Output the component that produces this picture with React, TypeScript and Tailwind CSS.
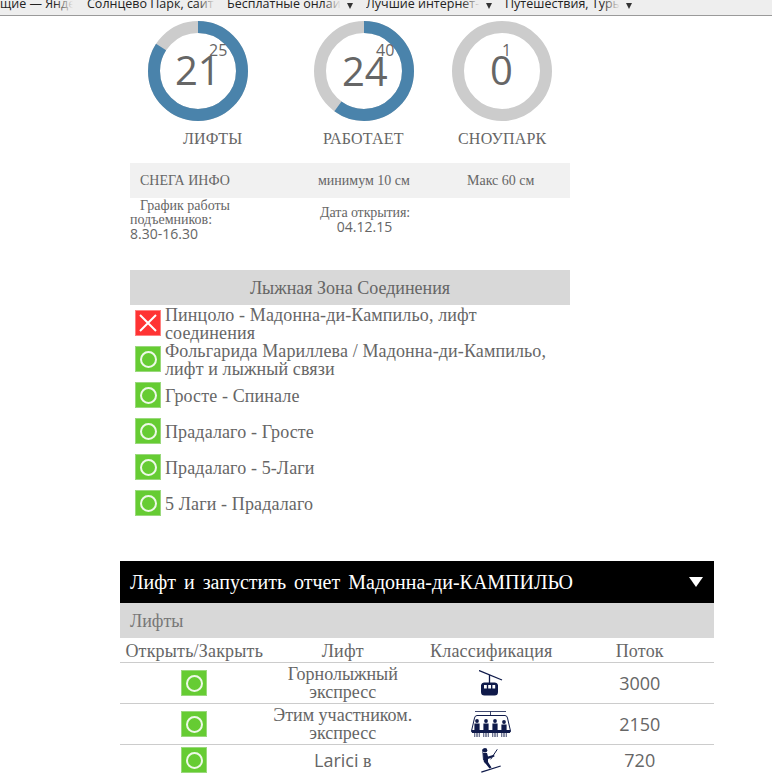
import React from 'react';

const serif = 'font-["Liberation_Serif",serif]';
const sans = 'font-["Open_Sans",sans-serif]';

const bookmarks = [
  { label: 'щие — Яндекс', width: 'w-[73px]', gap: 'ml-0', arrow: false },
  { label: 'Солнцево Парк, сайт', width: 'w-[128px]', gap: 'ml-[14px]', arrow: false },
  { label: 'Бесплатные онлайн', width: 'w-[114px]', gap: 'ml-[12px]', arrow: true },
  { label: 'Лучшие интернет-магазины', width: 'w-[114px]', gap: 'ml-[13px]', arrow: true },
  { label: 'Путешествия, Туры', width: 'w-[115px]', gap: 'ml-[13px]', arrow: true },
];

const Donut = ({ value, total }: { value: number; total: number }) => {
  const r = 44;
  const c = 2 * Math.PI * r;
  const filled = (value / total) * c;
  return (
    <svg viewBox="0 0 100 100" className="w-[100px] h-[100px] -rotate-90">
      <circle cx="50" cy="50" r={r} fill="none" stroke="#cccccc" strokeWidth="12" />
      {value > 0 && (
        <circle cx="50" cy="50" r={r} fill="none" stroke="#4a83ab" strokeWidth="12" strokeDasharray={`${filled} ${c}`} />
      )}
    </svg>
  );
};

const Gauge = ({ value, total, className, bigClass, smallClass }: { value: number; total: number; className: string; bigClass: string; smallClass: string }) => (
  <div className={`relative w-[100px] h-[100px] ${className}`}>
    <Donut value={value} total={total} />
    <span className={`absolute ${sans} text-[40px] leading-none text-[#666] ${bigClass}`}>{value}</span>
    <span className={`absolute ${sans} text-[16px] leading-none text-[#666] ${smallClass}`}>{total}</span>
  </div>
);

const OpenIcon = () => (
  <div className="w-[26px] h-[26px] shrink-0 bg-[#66cc33] border border-[#9ad97c] flex items-center justify-center">
    <div className="w-[17px] h-[17px] rounded-full border-2 border-[#eef9e8]" />
  </div>
);

const ClosedIcon = () => (
  <div className="w-[26px] h-[26px] shrink-0 bg-[#ff3333] border border-[#ff8080] flex items-center justify-center">
    <svg viewBox="0 0 18 18" className="w-[18px] h-[18px]">
      <path d="M1 1 L17 17 M17 1 L1 17" stroke="#fff" strokeWidth="2" fill="none" />
    </svg>
  </div>
);

const GondolaIcon = () => (
  <svg viewBox="0 0 24 26" className="w-[24px] h-[26px]">
    <path d="M0 0.500 L23 10" stroke="#0f1a4a" strokeWidth="1.300" />
    <path d="M10.500 5 V13" stroke="#0f1a4a" strokeWidth="1.300" />
    <path fill="#0f1a4a" fillRule="evenodd" d="M5 12.500 H16 Q18.500 12.500 19 15 L19 22 Q19 25.500 15.500 25.500 H5.500 Q2 25.500 2 22 L2 15 Q2.500 12.500 5 12.500 Z M5 15 V18.500 H7.800 V15 Z M9.200 15 V18.500 H12 V15 Z M13.400 15 V18.500 H16.200 V15 Z" />
  </svg>
);

const Person = ({ x, h = 0 }: { x: number; h?: number }) => (
  <g fill="#0f1a4a">
    <circle cx={x} cy={10 + h} r="1.900" />
    <path d={`M${x - 2.600} ${12.500 + h} H${x + 2.600} V26 H${x + 1.800} V22 H${x + 0.500} V26 H${x - 0.500} V22 H${x - 1.800} V26 H${x - 2.600} Z`} />
  </g>
);

const ChairIcon = () => (
  <svg viewBox="0 0 40 26" className="w-[40px] h-[26px]">
    <path d="M4 0.500 H35 M19.500 0.500 V4.500" stroke="#0f1a4a" strokeWidth="0.800" fill="none" />
    <path d="M6 4.500 H34 Q36 4.500 36.500 7 L39.500 20 Q39.500 21.500 38 21.500 H2 Q0.500 21.500 0.500 20 L3.500 7 Q4 4.500 6 4.500 Z" stroke="#0f1a4a" strokeWidth="1" fill="none" />
    <path d="M1 19 H39 V22 H1 Z" fill="#0f1a4a" />
    <Person x={6} />
    <Person x={15} />
    <Person x={24} />
    <Person x={33} h={1} />
  </svg>
);

const SkierIcon = () => (
  <svg viewBox="0 0 24 27" className="w-[24px] h-[27px]">
    <circle cx="6" cy="3.300" r="2.300" fill="#0f1a4a" />
    <path d="M4 6 H8 L9 9.500 L15 7.800 L15.500 9.500 L9 12 L9 15 L12.500 20.500 L10.500 21.500 L6.500 16.500 Q4.500 16 4.500 13 Z" fill="#0f1a4a" />
    <path d="M11.700 12.300 L18.300 2.300" stroke="#0f1a4a" strokeWidth="1" />
    <path d="M3.500 2.300 L4.500 13" stroke="#0f1a4a" strokeWidth="0.800" fill="none" />
    <path d="M2.300 25.200 L21.700 19" stroke="#0f1a4a" strokeWidth="1.300" />
  </svg>
);

const connections = [
  { name: 'Пинцоло - Мадонна-ди-Кампильо, лифт соединения', open: false },
  { name: 'Фольгарида Мариллева / Мадонна-ди-Кампильо, лифт и лыжный связи', open: true },
  { name: 'Гросте - Спинале', open: true },
  { name: 'Прадалаго - Гросте', open: true },
  { name: 'Прадалаго - 5-Лаги', open: true },
  { name: '5 Лаги - Прадалаго', open: true },
];

const lifts = [
  { name: 'Горнолыжный экспресс', icon: <GondolaIcon />, flow: '3000', height: 'h-[41px]', font: serif },
  { name: 'Этим участником. экспресс', icon: <ChairIcon />, flow: '2150', height: 'h-[41px]', font: serif },
  { name: 'Larici', icon: <SkierIcon />, flow: '720', height: 'h-[31px]', font: sans },
];

export default function App() {
  return (
    <div className={`w-[772px] h-[775px] overflow-hidden bg-white ${serif} text-[#666]`}>
      <div className="h-[16px] overflow-hidden bg-[#eeeeee] border-b border-[#9a9a9a] flex text-[12.500px] leading-[14px] text-[#222] font-['Open_Sans',sans-serif]">
        {bookmarks.map((b) => (
          <div key={b.label} className={`flex ${b.gap} shrink-0 -mt-[3px]`}>
            <div className={`relative ${b.width} overflow-hidden whitespace-nowrap`}>
              {b.label}
              <div className="absolute inset-y-0 right-0 w-[18px] bg-gradient-to-l from-[#eeeeee] to-transparent" />
            </div>
            {b.arrow && <span className="ml-[6px] mt-[6px] w-0 h-0 border-x-[3.500px] border-x-transparent border-t-[6px] border-t-[#333]" />}
          </div>
        ))}
      </div>

      <div className="ml-[130px] w-[440px] pt-[5px]">
        <div className="flex pl-[18px]">
          <Gauge value={21} total={25} className="" bigClass="left-[27px] top-[29px]" smallClass="left-[61px] top-[21px]" />
          <Gauge value={24} total={40} className="ml-[66px]" bigClass="left-[28px] top-[30px]" smallClass="left-[62px] top-[21px]" />
          <Gauge value={0} total={1} className="ml-[38px]" bigClass="left-[38px] top-[29px]" smallClass="left-[50px] top-[21px]" />
        </div>
        <div className="flex text-[16px] leading-[18px] tracking-[0.2px] mt-[9px] h-[33px]">
          <div className="w-[165px] pl-[53px]">ЛИФТЫ</div>
          <div className="w-[168px] pl-[28px]">РАБОТАЕТ</div>
          <div className="-ml-[5px]">СНОУПАРК</div>
        </div>

        <div className="h-[35px] bg-[#f1f1f1] flex items-center text-[14px]">
          <div className="w-[188px] pl-[10px]">СНЕГА ИНФО</div>
          <div className="w-[149px]">минимум 10 см</div>
          <div>Макс 60 см</div>
        </div>
        <div className="flex text-[14px] leading-[14px] mt-[1px] h-[71px]">
          <div className="w-[190px]">
            <div className="indent-[10px] w-[120px]">График работы подъемников:</div>
            <div className={sans}>8.30-16.30</div>
          </div>
          <div className="w-[89px] text-center pt-[7px]">
            <div className="whitespace-nowrap tracking-[-0.1px]">Дата открытия:</div>
            <div className={sans}>04.12.15</div>
          </div>
        </div>

        <div className="h-[35px] bg-[#d8d8d8] flex items-center justify-center text-[18px] pt-[1px]">Лыжная Зона Соединения</div>
        <div>
          {connections.map((c) => (
            <div key={c.name} className="h-[36px] flex items-center pl-[5px] gap-[4px] text-[18px] leading-[18px] tracking-[0.12px]">
              {c.open ? <OpenIcon /> : <ClosedIcon />}
              <div className="w-[385px] pt-[1px]">{c.name}</div>
            </div>
          ))}
        </div>
      </div>

      <div className="ml-[120px] w-[594px] mt-[40px]">
        <div className="h-[42px] bg-black text-white flex items-center justify-between pl-[10px] pr-[11px] text-[20px] [word-spacing:3px]">
          <span>Лифт и запустить отчет Мадонна-ди-КАМПИЛЬО</span>
          <span className="w-0 h-0 border-x-[7px] border-x-transparent border-t-[10px] border-t-white" />
        </div>
        <div className="h-[35px] bg-[#d8d8d8] flex items-center pl-[10px] pt-[1px] text-[18px] text-[#777]">Лифты</div>
        <div className="grid grid-cols-4 h-[25px] items-center text-center text-[18px] tracking-[0.2px] border-b border-[#ccc]">
          <div>Открыть/Закрыть</div>
          <div>Лифт</div>
          <div>Классификация</div>
          <div>Поток</div>
        </div>
        {lifts.map((l) => (
          <div key={l.flow} className={`grid grid-cols-4 ${l.height} items-center text-center text-[18px] leading-[18px] border-b border-[#ccc]`}>
            <div className="flex justify-center"><OpenIcon /></div>
            <div>
              <span className={l.font}>{l.name}</span>
              {l.flow === '720' && <span> в</span>}
            </div>
            <div className="flex justify-center">{l.icon}</div>
            <div className={sans}>{l.flow}</div>
          </div>
        ))}
      </div>
    </div>
  );
}
